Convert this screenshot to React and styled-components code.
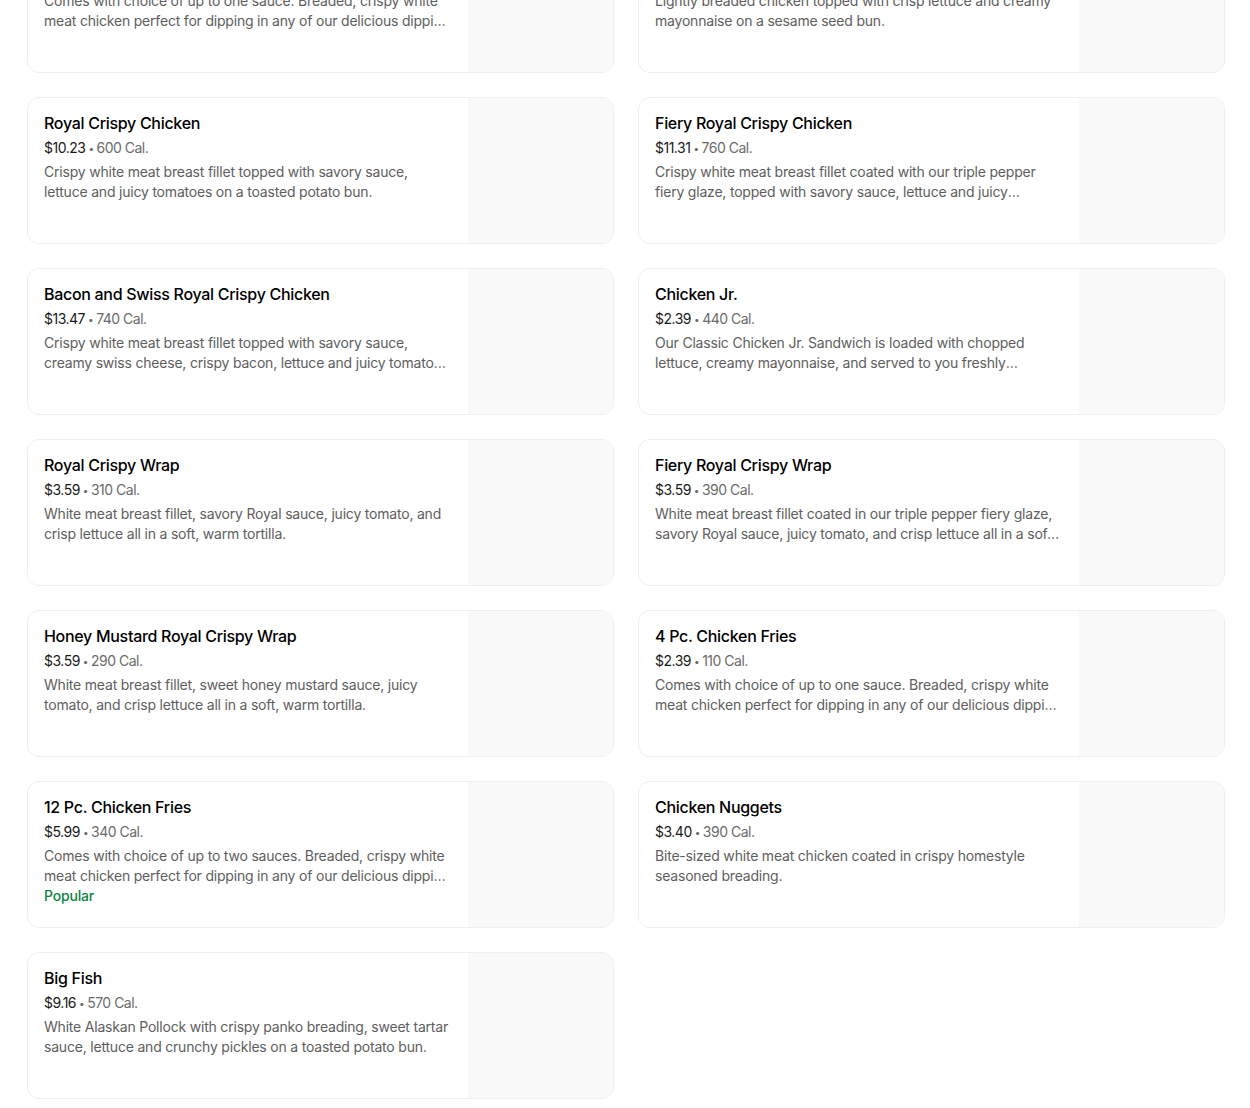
import React from 'react'
import styled, { createGlobalStyle } from 'styled-components'

const GlobalStyle = createGlobalStyle`
  html, body {
    margin: 0;
    padding: 0;
    background: #ffffff;
    overflow: hidden;
  }
  body {
    font-family: Inter, "Liberation Sans", sans-serif;
    color: #000000;
  }
`

const Page = styled.div`
  height: 1108px;
  overflow: hidden;
`

const Grid = styled.ul`
  list-style: none;
  margin: -74px 0 0 27px;
  padding: 0;
  width: 1198px;
  display: grid;
  grid-template-columns: 1fr 1fr;
  column-gap: 24px;
  row-gap: 24px;
`

const Card = styled.li`
  display: flex;
  height: 147px;
  box-sizing: border-box;
  border: 1px solid #efefef;
  border-radius: 12px;
  overflow: hidden;
  background: #ffffff;
`

const Info = styled.div`
  flex: 1;
  min-width: 0;
  padding: 14px 16px 0 16px;
`

const Title = styled.div`
  font-size: 16px;
  line-height: 22px;
  font-weight: 500;
  letter-spacing: -0.3px;
  color: #000000;
`

const Meta = styled.div`
  margin-top: 4px;
  font-size: 14px;
  line-height: 20px;
  letter-spacing: -0.5px;
  color: #6b6b6b;
`

const Price = styled.span`
  color: #1a1a1a;
`

const Dot = styled.span`
  display: inline-block;
  margin: 0 3px;
  font-size: 10px;
  vertical-align: 1px;
  color: #6b6b6b;
`

const Desc = styled.div`
  margin-top: 4px;
  font-size: 14px;
  line-height: 20px;
  letter-spacing: -0.2px;
  color: #5e5e5e;
  display: -webkit-box;
  -webkit-line-clamp: 2;
  -webkit-box-orient: vertical;
  overflow: hidden;
`

const Tag = styled.div`
  font-size: 14px;
  line-height: 20px;
  font-weight: 500;
  letter-spacing: -0.2px;
  color: #0e8345;
`

const Thumb = styled.div`
  width: 145px;
  flex-shrink: 0;
  background: #f9f9f9;
`

const items = [
  {
    title: '8 Pc. Chicken Fries',
    price: '$3.99',
    cal: '250 Cal.',
    desc: 'Comes with choice of up to one sauce. Breaded, crispy white meat chicken perfect for dipping in any of our delicious dipping sauces.',
  },
  {
    title: 'Original Chicken Sandwich',
    price: '$6.29',
    cal: '660 Cal.',
    desc: 'Lightly breaded chicken topped with crisp lettuce and creamy mayonnaise on a sesame seed bun.',
  },
  {
    title: 'Royal Crispy Chicken',
    price: '$10.23',
    cal: '600 Cal.',
    desc: 'Crispy white meat breast fillet topped with savory sauce, lettuce and juicy tomatoes on a toasted potato bun.',
  },
  {
    title: 'Fiery Royal Crispy Chicken',
    price: '$11.31',
    cal: '760 Cal.',
    desc: 'Crispy white meat breast fillet coated with our triple pepper fiery glaze, topped with savory sauce, lettuce and juicy tomatoes on a toasted potato bun.',
  },
  {
    title: 'Bacon and Swiss Royal Crispy Chicken',
    price: '$13.47',
    cal: '740 Cal.',
    desc: 'Crispy white meat breast fillet topped with savory sauce, creamy swiss cheese, crispy bacon, lettuce and juicy tomatoes on a toasted potato bun.',
  },
  {
    title: 'Chicken Jr.',
    price: '$2.39',
    cal: '440 Cal.',
    desc: 'Our Classic Chicken Jr. Sandwich is loaded with chopped lettuce, creamy mayonnaise, and served to you freshly prepared on a toasted bun.',
  },
  {
    title: 'Royal Crispy Wrap',
    price: '$3.59',
    cal: '310 Cal.',
    desc: 'White meat breast fillet, savory Royal sauce, juicy tomato, and crisp lettuce all in a soft, warm tortilla.',
  },
  {
    title: 'Fiery Royal Crispy Wrap',
    price: '$3.59',
    cal: '390 Cal.',
    desc: 'White meat breast fillet coated in our triple pepper fiery glaze, savory Royal sauce, juicy tomato, and crisp lettuce all in a soft, warm tortilla.',
  },
  {
    title: 'Honey Mustard Royal Crispy Wrap',
    price: '$3.59',
    cal: '290 Cal.',
    desc: 'White meat breast fillet, sweet honey mustard sauce, juicy tomato, and crisp lettuce all in a soft, warm tortilla.',
  },
  {
    title: '4 Pc. Chicken Fries',
    price: '$2.39',
    cal: '110 Cal.',
    desc: 'Comes with choice of up to one sauce. Breaded, crispy white meat chicken perfect for dipping in any of our delicious dipping sauces.',
  },
  {
    title: '12 Pc. Chicken Fries',
    price: '$5.99',
    cal: '340 Cal.',
    desc: 'Comes with choice of up to two sauces. Breaded, crispy white meat chicken perfect for dipping in any of our delicious dipping sauces.',
    tag: 'Popular',
  },
  {
    title: 'Chicken Nuggets',
    price: '$3.40',
    cal: '390 Cal.',
    desc: 'Bite-sized white meat chicken coated in crispy homestyle seasoned breading.',
  },
  {
    title: 'Big Fish',
    price: '$9.16',
    cal: '570 Cal.',
    desc: 'White Alaskan Pollock with crispy panko breading, sweet tartar sauce, lettuce and crunchy pickles on a toasted potato bun.',
  },
]

const MenuItem = ({ item }) => (
  <Card>
    <Info>
      <Title>{item.title}</Title>
      <Meta>
        <Price>{item.price}</Price>
        <Dot>•</Dot>
        {item.cal}
      </Meta>
      <Desc>{item.desc}</Desc>
      {item.tag && <Tag>{item.tag}</Tag>}
    </Info>
    <Thumb />
  </Card>
)

export default function App() {
  return (
    <Page>
      <GlobalStyle />
      <Grid>
        {items.map((item) => (
          <MenuItem key={item.title} item={item} />
        ))}
      </Grid>
    </Page>
  )
}
